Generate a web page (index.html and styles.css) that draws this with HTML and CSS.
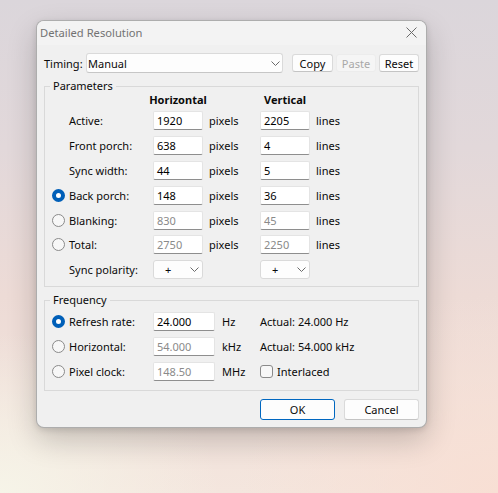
FILE: index.html
```html
<!DOCTYPE html>
<html lang="en">
<head>
<meta charset="utf-8">
<title>Detailed Resolution</title>
<link rel="stylesheet" href="styles.css">
</head>
<body>
<div class="desk">
  <div class="dialog">
    <div class="titlebar">
      <span class="title">Detailed Resolution</span>
      <svg class="close" width="11" height="11" viewBox="0 0 11 11"><path d="M0.5 0.5 L10.5 10.5 M10.5 0.5 L0.5 10.5" stroke="#6a6a6a" stroke-width="1" fill="none"/></svg>
    </div>
    <div class="content">
      <div class="timing">
        <span class="timing-label">Timing:</span>
        <div class="combo combo-wide"><span>Manual</span><svg class="chev" width="9" height="5" viewBox="0 0 9 5"><path d="M0.5 0.5 L4.5 4.5 L8.5 0.5" stroke="#6a6a6a" fill="none"/></svg></div>
        <div class="btns">
          <span class="btn btn-copy">Copy</span>
          <span class="btn btn-disabled">Paste</span>
          <span class="btn">Reset</span>
        </div>
      </div>

      <fieldset class="group group-params">
        <legend>Parameters</legend>
        <div class="params">
          <span></span><span></span><span class="colhead">Horizontal</span><span></span><span class="colhead">Vertical</span><span></span>

          <span></span><span>Active:</span><span class="field">1920</span><span class="unit">pixels</span><span class="field">2205</span><span class="unit">lines</span>
          <span></span><span>Front porch:</span><span class="field">638</span><span class="unit">pixels</span><span class="field">4</span><span class="unit">lines</span>
          <span></span><span>Sync width:</span><span class="field">44</span><span class="unit">pixels</span><span class="field">5</span><span class="unit">lines</span>
          <span class="radio on"></span><span>Back porch:</span><span class="field">148</span><span class="unit">pixels</span><span class="field">36</span><span class="unit">lines</span>
          <span class="radio"></span><span>Blanking:</span><span class="field off">830</span><span class="unit">pixels</span><span class="field off">45</span><span class="unit">lines</span>
          <span class="radio"></span><span>Total:</span><span class="field off">2750</span><span class="unit">pixels</span><span class="field off">2250</span><span class="unit">lines</span>
          <span></span><span>Sync polarity:</span>
          <div class="combo combo-small"><span>+</span><svg class="chev" width="9" height="5" viewBox="0 0 9 5"><path d="M0.5 0.5 L4.5 4.5 L8.5 0.5" stroke="#6a6a6a" fill="none"/></svg></div>
          <span></span>
          <div class="combo combo-small"><span>+</span><svg class="chev" width="9" height="5" viewBox="0 0 9 5"><path d="M0.5 0.5 L4.5 4.5 L8.5 0.5" stroke="#6a6a6a" fill="none"/></svg></div>
          <span></span>
        </div>
      </fieldset>

      <fieldset class="group group-freq">
        <legend>Frequency</legend>
        <div class="freq">
          <span class="radio on"></span><span>Refresh rate:</span><span class="field">24.000</span><span class="unit">Hz</span><span>Actual: 24.000 Hz</span>
          <span class="radio"></span><span>Horizontal:</span><span class="field off">54.000</span><span class="unit">kHz</span><span>Actual: 54.000 kHz</span>
          <span class="radio"></span><span>Pixel clock:</span><span class="field off">148.50</span><span class="unit">MHz</span><span class="check-row"><span class="check"></span>Interlaced</span>
        </div>
      </fieldset>

      <div class="actions">
        <span class="btn btn-big btn-default">OK</span>
        <span class="btn btn-big">Cancel</span>
      </div>
    </div>
  </div>
</div>
</body>
</html>
```
FILE: styles.css
```css
* { box-sizing: border-box; }

html, body {
  margin: 0;
  padding: 0;
}

body {
  width: 498px;
  height: 493px;
  overflow: hidden;
  font-family: "Noto Sans", "Open Sans", sans-serif;
  font-size: 11px;
  color: #0a0a0a;
  background:
    radial-gradient(ellipse 220px 160px at 0% 100%, #f6f4e8 0%, rgba(246,244,232,0) 100%),
    radial-gradient(ellipse 260px 200px at 100% 100%, #f8dfd4 0%, rgba(248,223,212,0) 100%),
    linear-gradient(180deg, #dbd6db 0%, #e2d8da 30%, #eddbd6 60%, #f4e6de 100%);
}

.desk {
  padding: 20px 0 0 36px;
}

.dialog {
  width: 391px;
  height: 408px;
  background: #f0f0f0;
  border: 1px solid rgba(0, 0, 0, 0.28);
  border-radius: 8px;
  box-shadow: 0 12px 30px rgba(0, 0, 0, 0.2), 0 2px 6px rgba(0, 0, 0, 0.12);
  overflow: hidden;
}

.titlebar {
  height: 24px;
  background: #f3f3f3;
  display: flex;
  align-items: center;
  justify-content: space-between;
  padding: 0 9px 0 3px;
}

.title {
  color: #727272;
  font-size: 11.2px;
  line-height: 16px;
}

.close {
  display: block;
  margin-top: -2px;
}

.content {
  padding: 8px 7px 0 7px;
}

.timing {
  display: flex;
  align-items: center;
  height: 20px;
}

.timing-label {
  flex: 0 0 42px;
}

.combo {
  background: #fdfdfd;
  border: 1px solid #dadada;
  border-radius: 3px;
  display: flex;
  align-items: center;
  justify-content: space-between;
}

.combo-wide {
  width: 197px;
  height: 20px;
  padding: 0 2px 0 1px;
  border-bottom-color: #c6c6c6;
}

.combo-small {
  width: 50px;
  height: 19px;
  padding: 0 3px 0 11px;
}

.chev { display: block; }

.btns {
  display: flex;
  gap: 3px;
  margin-left: 9px;
}

.btn {
  display: flex;
  align-items: center;
  justify-content: center;
  height: 18px;
  width: 40px;
  background: #fdfdfd;
  border: 1px solid #dadada;
  border-bottom-color: #c4c4c4;
  border-radius: 3px;
}

.btn-copy { width: 41px; }

.btn-disabled {
  background: #f5f5f5;
  border-color: #ececec;
  color: #a8a8a8;
}

.group {
  margin: 5px 0 0;
  min-width: 0;
  border: 1px solid #d9d9d9;
  padding: 0 0 4px 7px;
}

.group legend {
  margin-left: -2px;
  padding: 0 3px;
  line-height: 16px;
}

.group-freq {
  padding-bottom: 6px;
}

.params {
  display: grid;
  grid-template-columns: 17px 84px 50px 57px 50px 1fr;
  grid-template-rows: 17.6px;
  grid-auto-rows: 24.8px;
  align-items: center;
  margin-top: -3px;
}

.freq {
  display: grid;
  grid-template-columns: 17px 84px 62px 45px 1fr;
  grid-auto-rows: 24.8px;
  align-items: center;
  margin-top: 1px;
}

.colhead {
  font-weight: 700;
  justify-self: center;
  white-space: nowrap;
}

.field {
  height: 19px;
  background: #fff;
  border: 1px solid #e4e4e4;
  border-bottom-color: #8e8e8e;
  border-radius: 2px;
  padding: 0 3px;
  line-height: 17px;
  color: #000;
}

.field.off { color: #8a8a8a; }

.unit { padding-left: 6px; }
.freq .unit { padding-left: 7px; }

.radio {
  width: 13px;
  height: 13px;
  border-radius: 50%;
  border: 1px solid #8a8a8a;
  background: #f7f7f7;
}

.radio.on {
  border: 4px solid #005fb8;
  background: #fff;
}

.check-row {
  display: flex;
  align-items: center;
  gap: 4px;
}

.check {
  width: 13px;
  height: 13px;
  border: 1px solid #8a8a8a;
  border-radius: 3px;
  background: #f7f7f7;
}

.actions {
  display: flex;
  justify-content: flex-end;
  gap: 9px;
  margin-top: 8px;
}

.btn-big {
  width: 75px;
  height: 21px;
}

.btn-default {
  border: 1px solid #0067c0;
}
```
